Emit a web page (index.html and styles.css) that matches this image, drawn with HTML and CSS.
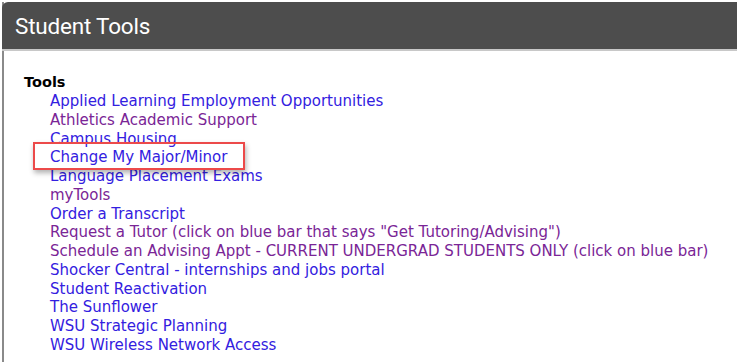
FILE: index.html
```html
<!DOCTYPE html>
<html>
<head>
<meta charset="utf-8">
<link rel="stylesheet" href="styles.css">
</head>
<body>
<div class="panel">
  <div class="panel-header"><h1 class="panel-title">Student Tools</h1></div>
  <div class="panel-body">
    <div class="group-title">Tools</div>
    <ul class="tool-list">
      <li><a class="link" href="#">Applied Learning Employment Opportunities</a></li>
      <li><a class="link visited" href="#">Athletics Academic Support</a></li>
      <li><a class="link" href="#">Campus Housing</a></li>
      <li class="marked"><a class="link" href="#">Change My Major/Minor</a><span class="highlight"></span></li>
      <li><a class="link" href="#">Language Placement Exams</a></li>
      <li><a class="link visited" href="#">myTools</a></li>
      <li><a class="link" href="#">Order a Transcript</a></li>
      <li><a class="link visited" href="#">Request a Tutor (click on blue bar that says "Get Tutoring/Advising")</a></li>
      <li><a class="link visited" href="#">Schedule an Advising Appt - CURRENT UNDERGRAD STUDENTS ONLY (click on blue bar)</a></li>
      <li><a class="link" href="#">Shocker Central - internships and jobs portal</a></li>
      <li><a class="link" href="#">Student Reactivation</a></li>
      <li><a class="link" href="#">The Sunflower</a></li>
      <li><a class="link" href="#">WSU Strategic Planning</a></li>
      <li><a class="link" href="#">WSU Wireless Network Access</a></li>
    </ul>
  </div>
</div>
</body>
</html>
```
FILE: styles.css
```css
html, body {
  margin: 0;
  padding: 0;
  background: #ffffff;
  overflow: hidden;
}
.panel {
  margin: 2px 0 0 2px;
  border-left: 2px solid #8a8a8a;
  height: calc(100vh - 2px);
  box-sizing: border-box;
}
.panel-header {
  background: #4d4d4d;
  height: 47px;
  border-top-left-radius: 6px;
  border-bottom: 2px solid #c8c8c8;
  margin-left: -2px;
  display: flex;
  align-items: center;
  padding-left: 13px;
}
.panel-title {
  margin: 0;
  font-family: Roboto, "Liberation Sans", sans-serif;
  font-weight: 400;
  font-size: 22.5px;
  color: #ffffff;
  letter-spacing: -0.2px;
}
.panel-body {
  padding: 22px 0 0 20px;
  font-family: "DejaVu Sans", Verdana, sans-serif;
  font-size: 15px;
}
.group-title {
  font-weight: bold;
  color: #000000;
  font-size: 14.5px;
  line-height: 19px;
}
.tool-list {
  list-style: none;
  margin: 0;
  padding: 0 0 0 26px;
}
.tool-list li {
  line-height: 18.75px;
  white-space: nowrap;
}
.link {
  color: #3320e0;
  text-decoration: none;
}
.link.visited {
  color: #7a2596;
}
.marked {
  position: relative;
}
.highlight {
  position: absolute;
  left: -17px;
  top: -6px;
  width: 208px;
  height: 24px;
  border: 2px solid #ec4a4a;
  box-shadow: 1px 3px 5px rgba(0, 0, 0, 0.3);
}
```
